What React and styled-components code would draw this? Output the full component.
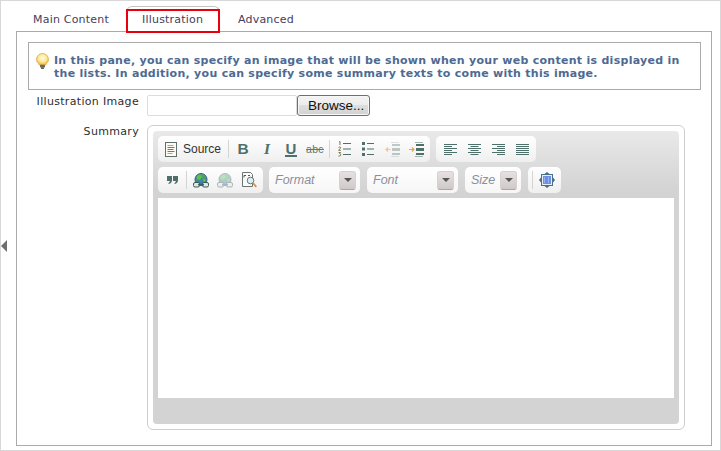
import React from 'react';
import styled, { createGlobalStyle } from 'styled-components';

const Global = createGlobalStyle`
  html, body { margin: 0; padding: 0; background: #fff; }
  #root { width: 721px; height: 451px; }
`;

const Frame = styled.div`
  position: relative;
  box-sizing: border-box;
  width: 721px;
  height: 451px;
  border: 1px solid #d8d8d8;
  padding: 5px 8px 4px 15px;
  display: flex;
  flex-direction: column;
  font-family: "DejaVu Sans", Verdana, sans-serif;
  font-size: 11px;
  background: #fff;
`;

const Collapse = styled.div`
  position: absolute;
  left: 0;
  top: 239px;
  width: 0;
  height: 0;
  border-top: 6px solid transparent;
  border-bottom: 6px solid transparent;
  border-right: 6px solid #6e6e6e;
`;

const TabStrip = styled.div`
  display: flex;
  gap: 2px;
  height: 26px;
  padding-left: 1px;
  position: relative;
  z-index: 1;
  margin-bottom: -1px;
`;

const Tab = styled.div`
  position: relative;
  box-sizing: border-box;
  width: ${p => p.$w}px;
  height: 26px;
  padding: 7px 0 0 16px;
  line-height: 13px;
  letter-spacing: 0.2px;
  color: #45405c;
  white-space: nowrap;
  ${p => p.$active && `
    border: 1px solid #c4c4c4;
    border-bottom: 1px solid #fff;
    border-radius: 6px 6px 0 0;
    padding-left: 15px;
    padding-top: 6px;
  `}
`;

const RedMark = styled.div`
  position: absolute;
  left: -1px;
  top: 2px;
  width: 94px;
  height: 24px;
  box-sizing: border-box;
  border: 2px solid #e8000c;
`;

const Pane = styled.div`
  flex: 1;
  min-height: 0;
  box-sizing: border-box;
  border: 1px solid #aaa;
  padding: 10px 10px 14px 11px;
  display: flex;
  flex-direction: column;
`;

const Notice = styled.div`
  box-sizing: border-box;
  width: 673px;
  height: 48px;
  border: 1px solid #aaa;
  display: flex;
  align-items: flex-start;
  gap: 5px;
  padding: 10px 0 0 7px;
  flex-shrink: 0;
`;

const NoticeText = styled.div`
  font-weight: 700;
  font-size: 11px;
  line-height: 13px;
  letter-spacing: 0.28px;
  margin-top: 1px;
  color: #4e6a92;
  white-space: nowrap;
`;

const FormRow = styled.div`
  display: flex;
  margin-top: ${p => p.$mt}px;
`;

const Label = styled.div`
  width: 111px;
  text-align: right;
  color: #2e2e2e;
  line-height: 13px;
  letter-spacing: 0.32px;
  margin-right: 8px;
  flex-shrink: 0;
  white-space: nowrap;
`;

const FileInput = styled.div`
  box-sizing: border-box;
  width: 150px;
  height: 21px;
  border: 1px solid #dcdcdc;
  border-radius: 2px;
  background: #fff;
`;

const BrowseButton = styled.div`
  box-sizing: border-box;
  width: 73px;
  height: 21px;
  border: 1px solid #707070;
  border-radius: 3px;
  box-shadow: inset 0 0 0 1px #f7f7f7;
  background: linear-gradient(#f4f4f4 0%, #ececec 45%, #dedede 50%, #d2d2d2 100%);
  font-family: "Liberation Sans", Arial, sans-serif;
  font-size: 13.5px;
  line-height: 20px;
  color: #111;
  padding-left: 10px;
  white-space: nowrap;
`;

const EditorBox = styled.div`
  box-sizing: border-box;
  width: 538px;
  height: 305px;
  border: 1px solid #cfcfcf;
  border-radius: 6px;
  padding: 5px;
`;

const Editor = styled.div`
  height: 293px;
  border-radius: 4px;
  background: linear-gradient(#e9e9e9 0, #d3d3d3 60px, #d3d3d3 100%);
  display: flex;
  flex-direction: column;
`;

const Toolbar = styled.div`
  padding: 5px;
  display: flex;
  flex-direction: column;
  gap: 5px;
`;

const ToolRow = styled.div`
  display: flex;
  height: 26px;
`;

const Group = styled.div`
  box-sizing: border-box;
  display: flex;
  align-items: center;
  height: 26px;
  padding: 0 2px;
  border-radius: 5px;
  margin-right: ${p => p.$mr ?? 6}px;
  background: linear-gradient(#ffffff, #efefef);
`;

const Btn = styled.div`
  width: ${p => p.$w ?? 24}px;
  height: 22px;
  display: flex;
  align-items: center;
  justify-content: center;
  gap: 6px;
  flex-shrink: 0;
  opacity: ${p => (p.$off ? 0.4 : 1)};
  svg { display: block; flex-shrink: 0; }
`;

const BtnText = styled.span`
  font-family: "Liberation Sans", Arial, sans-serif;
  font-size: 12px;
  color: #333;
`;

const StyleGlyph = styled.span`
  font-family: ${p => (p.$serif ? '"Liberation Serif", serif' : '"Liberation Sans", Arial, sans-serif')};
  font-weight: 700;
  font-style: ${p => (p.$italic ? 'italic' : 'normal')};
  font-size: 15.5px;
  line-height: 14px;
  color: #4f6f6b;
  ${p => p.$under && `
    font-size: 15px;
    border-bottom: 2px solid #4f6f6b;
    line-height: 13px;
    padding: 0 1px;
  `}
`;

const StrikeGlyph = styled.span`
  font-family: "Liberation Sans", Arial, sans-serif;
  font-size: 10.5px;
  letter-spacing: 0.3px;
  line-height: 12px;
  color: #5c7a76;
  text-decoration: line-through;
`;

const Sep = styled.div`
  width: 1px;
  height: 18px;
  margin: 0 2px;
  background: #d4d4d4;
  flex-shrink: 0;
`;

const Combo = styled.div`
  box-sizing: border-box;
  width: ${p => p.$w}px;
  height: 26px;
  margin-right: 7px;
  padding: 0 4px 0 6px;
  border-radius: 5px;
  background: linear-gradient(#ffffff, #f6f6f6);
  display: flex;
  align-items: center;
  justify-content: space-between;
  font-family: "Liberation Sans", Arial, sans-serif;
  font-style: italic;
  font-size: 12.5px;
  color: #8b8f9c;
`;

const ComboArrow = styled.div`
  box-sizing: border-box;
  width: 17px;
  height: 19px;
  border-radius: 3px;
  border: 1px solid #d6d0d0;
  border-bottom-color: #aaa6a6;
  background: linear-gradient(#e6e0e0, #cfc9c9);
  display: flex;
  align-items: center;
  justify-content: center;
  &::after {
    content: "";
    border-left: 4px solid transparent;
    border-right: 4px solid transparent;
    border-top: 4px solid #555;
  }
`;

const Content = styled.div`
  margin: 0 5px;
  height: 200px;
  background: #fff;
`;

const G = '#4f6f6b';

const Bulb = () => (
  <svg width="13" height="16" viewBox="0 0 13 16" style={{ flexShrink: 0 }}>
    <defs>
      <radialGradient id="bulb" cx="0.5" cy="0.4" r="0.6">
        <stop offset="0" stopColor="#fffbe0" />
        <stop offset="0.55" stopColor="#fde99a" />
        <stop offset="1" stopColor="#efb53a" />
      </radialGradient>
    </defs>
    <path d="M6.500.5A6 6 0 0 0 .5 6.400c0 2 1.100 3 1.900 4 .5.600.7 1 .7 1.600h6.800c0-.6.200-1 .7-1.600.8-1 1.900-2 1.900-4A6 6 0 0 0 6.500.5z" fill="url(#bulb)" stroke="#e8a93a" strokeWidth=".8" />
    <rect x="4" y="11.800" width="5" height="2.800" rx=".6" fill="#6a6a6a" />
    <rect x="5" y="14.500" width="3" height="1.300" rx=".5" fill="#2e2e2e" />
  </svg>
);

const SourceIcon = () => (
  <svg width="12" height="15" viewBox="0 0 12 15">
    <rect x=".5" y=".5" width="11" height="14" fill="#fbfbf4" stroke="#5f6f6c" />
    <path d="M2.500 3.500h6" stroke="#e09a3c" />
    <path d="M2.500 5.500h7M2.500 7.500h6M2.500 9.500h7" stroke="#777" />
    <path d="M2.500 11.500h5" stroke="#e09a3c" />
  </svg>
);

const NumList = () => (
  <svg width="13" height="16" viewBox="0 0 13 16">
    <path fill="none" stroke="#6a6a40" strokeWidth=".9" d="M1 1l1-.5V4M.5 6.500c.6-.8 2.200-.6 2.200.3S1 8.200.5 9.300h2.300M.6 11.500h2l-1 1c1.500 0 1.500 2.500 0 2.500H.5" />
    <path stroke={G} strokeWidth="1.200" d="M5 2.500h8M5 8h8M5 13.500h8" />
  </svg>
);

const BulList = () => (
  <svg width="12" height="14" viewBox="0 0 12 14">
    <rect width="3" height="3" y="0" fill={G} />
    <rect width="3" height="3" y="5.500" fill={G} />
    <rect width="3" height="3" y="11" fill={G} />
    <path stroke={G} strokeWidth="1.200" d="M5 1.500h7M5 7h7M5 12.500h7" />
  </svg>
);

const Indent = ({ out }) => (
  <svg width="15" height="15" viewBox="0 0 15 15">
    <g opacity={out ? 0.35 : 1}>
      <path stroke={G} strokeDasharray="1 1" d="M6.500 .5h8M6.500 14.500h8" />
      <rect x="7" y="2" width="8" height="2" fill={G} />
      <rect x="7" y="6" width="8" height="3" fill={G} />
      <rect x="7" y="11" width="8" height="2" fill={G} />
    </g>
    {out
      ? <path fill="none" stroke="#f2b36a" strokeWidth="1.200" opacity=".75" d="M5.500 7.500H1M3 5.500l-2 2 2 2" />
      : <path fill="none" stroke="#f0a040" strokeWidth="1.200" d="M0 7.500h5M3 5.500l2 2-2 2" />}
  </svg>
);

const Align = ({ lines }) => (
  <svg width="13" height="13" viewBox="0 0 13 13">
    {lines.map(([x, w], i) => (
      <rect key={i} x={x} y={i * 2 + 1} width={w} height="1" fill={G} />
    ))}
  </svg>
);

const Quote = () => (
  <svg width="11" height="8" viewBox="0 0 11 8">
    <path fill={G} d="M0 0h5v4.200C5 6 3.800 7.500 1.800 8l-.5-1c1-.4 1.500-1 1.500-2H0zM6 0h5v4.200C11 6 9.800 7.500 7.800 8l-.5-1c1-.4 1.500-1 1.500-2H6z" />
  </svg>
);

const Globe = ({ id }) => (
  <svg width="16" height="15" viewBox="0 0 16 15">
    <defs>
      <linearGradient id={id} x1="0" y1="0" x2="0" y2="1">
        <stop offset="0" stopColor="#59b04c" />
        <stop offset="1" stopColor="#2f6fd0" />
      </linearGradient>
    </defs>
    <circle cx="8" cy="6.500" r="6" fill={`url(#${id})`} stroke="#2f5f86" />
    <path d="M4 3l3-1.500L9 4 6.500 7 4 6zM10 6l3 .5-2 3.500z" fill="#5fc04a" />
    <rect x=".5" y="9.500" width="6" height="4.500" rx="1.500" fill="#dfe8e6" stroke="#3a5a58" />
    <rect x="9.500" y="9.500" width="6" height="4.500" rx="1.500" fill="#dfe8e6" stroke="#3a5a58" />
    <path d="M5 11.800h6" stroke="#3a5a58" strokeWidth="1.400" />
  </svg>
);

const Find = () => (
  <svg width="15" height="16" viewBox="0 0 15 16">
    <path d="M.5.5h8l2 2v12H.500z" fill="#fafafa" stroke="#6a7472" />
    <path d="M2 3.500h2M2 3.500v2M6 3.500h2" stroke="#555" />
    <circle cx="8.500" cy="8.500" r="3.300" fill="#dfeef5" stroke="#6a7472" />
    <path d="M11 11l3.300 3.800" stroke="#e0913a" strokeWidth="1.800" />
  </svg>
);

const Maximize = () => (
  <svg width="16" height="16" viewBox="0 0 16 16">
    <path fill={G} d="M8 0l2.500 2h-5zM8 16l-2.500-2h5zM0 8l2-2.500v5zM16 8l-2 2.500v-5z" />
    <rect x="2.500" y="2.500" width="11" height="11" fill="#e6edfb" stroke="#47708a" />
    <rect x="4" y="4" width="8" height="8" fill="#6f8fe6" />
    <path d="M5 6h2M9 6h2M5 8h2M9 8h2M5 10h2M9 10h2" stroke="#c6d4fa" strokeDasharray="1 1" />
  </svg>
);

const leftA = [[0, 13], [0, 8], [0, 13], [0, 8], [0, 13], [0, 8]];
const centerA = [[0, 13], [2.5, 8], [0, 13], [2.5, 8], [0, 13], [2.5, 8]];
const rightA = [[0, 13], [5, 8], [0, 13], [5, 8], [0, 13], [5, 8]];
const justA = [[0, 13], [0, 13], [0, 13], [0, 13], [0, 13], [0, 13]];

export default function App() {
  return (
    <>
      <Global />
      <Frame>
        <Collapse />
        <TabStrip>
          <Tab $w={107}>Main Content</Tab>
          <Tab $w={94} $active>
            Illustration
            <RedMark />
          </Tab>
          <Tab $w={90}>Advanced</Tab>
        </TabStrip>
        <Pane>
          <Notice>
            <Bulb />
            <NoticeText>
              In this pane, you can specify an image that will be shown when your web content is displayed in
              <br />
              the lists. In addition, you can specify some summary texts to come with this image.
            </NoticeText>
          </Notice>
          <FormRow $mt={5}>
            <Label>Illustration Image</Label>
            <FileInput />
            <BrowseButton>Browse...</BrowseButton>
          </FormRow>
          <FormRow $mt={9}>
            <Label>Summary</Label>
            <EditorBox>
              <Editor>
                <Toolbar>
                  <ToolRow>
                    <Group>
                      <Btn $w={66}><SourceIcon /><BtnText>Source</BtnText></Btn>
                      <Sep />
                      <Btn><StyleGlyph>B</StyleGlyph></Btn>
                      <Btn><StyleGlyph $serif $italic>I</StyleGlyph></Btn>
                      <Btn><StyleGlyph $under>U</StyleGlyph></Btn>
                      <Btn><StrikeGlyph>abc</StrikeGlyph></Btn>
                      <Sep />
                      <Btn><NumList /></Btn>
                      <Btn><BulList /></Btn>
                      <Btn><Indent out /></Btn>
                      <Btn><Indent /></Btn>
                    </Group>
                    <Group>
                      <Btn><Align lines={leftA} /></Btn>
                      <Btn><Align lines={centerA} /></Btn>
                      <Btn><Align lines={rightA} /></Btn>
                      <Btn><Align lines={justA} /></Btn>
                    </Group>
                  </ToolRow>
                  <ToolRow>
                    <Group>
                      <Btn><Quote /></Btn>
                      <Sep />
                      <Btn><Globe id="g1" /></Btn>
                      <Btn $off><Globe id="g2" /></Btn>
                      <Btn><Find /></Btn>
                    </Group>
                    <Combo $w={91}>Format<ComboArrow /></Combo>
                    <Combo $w={91}>Font<ComboArrow /></Combo>
                    <Combo $w={56}>Size<ComboArrow /></Combo>
                    <Group $mr={0}>
                      <Sep />
                      <Btn><Maximize /></Btn>
                    </Group>
                  </ToolRow>
                </Toolbar>
                <Content />
              </Editor>
            </EditorBox>
          </FormRow>
        </Pane>
      </Frame>
    </>
  );
}
